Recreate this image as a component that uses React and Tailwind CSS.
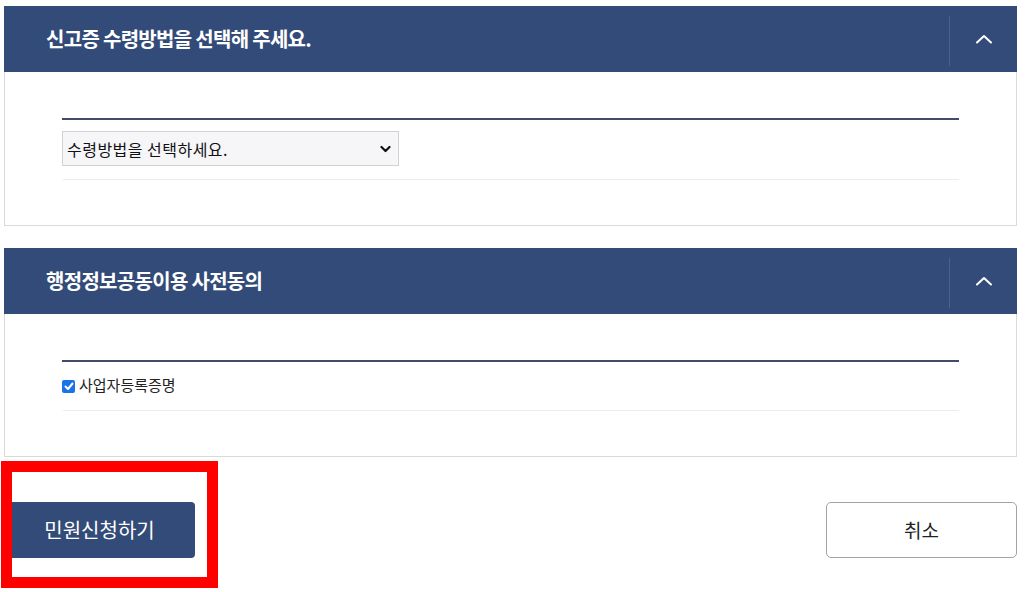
import React from "react";

const font = { fontFamily: '"Noto Sans CJK KR", "Noto Sans", sans-serif' };

function Chevron() {
    return (
        <svg width="18" height="12" viewBox="0 0 18 12" fill="none" stroke="white" strokeWidth="2" strokeLinecap="round" strokeLinejoin="round">
            <path d="M2 9.5L9 3l7 6.5" />
        </svg>
    );
}

function Panel({ title, children, className = "" }) {
    return (
        <section className={"w-[1013px] " + className}>
            <div className="h-[66px] bg-[#334b78] flex items-center">
                <h2 className="flex-1 pl-[42px] text-[20px] font-bold text-white tracking-[-0.035em]">{title}</h2>
                <div className="w-px h-[50px] mt-[4px] bg-[#4b6190]" />
                <button className="w-[67px] h-full flex items-center justify-center">
                    <Chevron />
                </button>
            </div>
            <div className="border border-t-0 border-[#d9d9d9] px-[57px] pt-[46px] pb-[45px]">
                <div className="h-[2px] bg-[#3f4e68]" />
                {children}
                <div className="h-px bg-[#ececec] ml-px" />
            </div>
        </section>
    );
}

export default function App() {
    return (
        <div className="relative w-[1036px] h-[592px] bg-white pl-[4px] pt-[6px]" style={font}>
            <Panel title="신고증 수령방법을 선택해 주세요.">
                <div className="pt-[11px] pb-[13px]">
                    <div className="w-[337px] h-[35px] bg-[#f6f5f8] border border-[#d2d2d2] flex items-center justify-between pl-[4px] pr-[7px]">
                        <span className="text-[16px] tracking-[0.03em] text-[#111]">수령방법을 선택하세요.</span>
                        <svg width="11" height="8" viewBox="0 0 11 8" fill="none" stroke="#111" strokeWidth="2.2" strokeLinecap="round" strokeLinejoin="round">
                            <path d="M1.5 2l4 4 4-4" />
                        </svg>
                    </div>
                </div>
            </Panel>

            <Panel title="행정정보공동이용 사전동의" className="mt-[22px]">
                <div className="h-[48px] flex items-center gap-[4px]">
                    <span className="w-[13px] h-[13px] rounded-[2px] bg-[#1a73e8] flex items-center justify-center">
                        <svg width="10" height="9" viewBox="0 0 10 9" fill="none" stroke="white" strokeWidth="2" strokeLinecap="round" strokeLinejoin="round">
                            <path d="M1.5 4.5l2.5 2.5 4.5-5.5" />
                        </svg>
                    </span>
                    <span className="text-[15px] text-[#222] pb-[2px]">사업자등록증명</span>
                </div>
            </Panel>

            <div className="w-[1013px] mt-[45px] flex justify-between">
                <button className="w-[191px] h-[56px] rounded-[4px] bg-[#334b78] text-white text-[20px]">민원신청하기</button>
                <button className="w-[191px] h-[56px] rounded-[5px] border border-[#a3a3a3] bg-white text-[#222] text-[19px]">취소</button>
            </div>

            <div className="absolute left-[1px] top-[461px] w-[217px] h-[127px] border-[11px] border-[#ff0000]" />
        </div>
    );
}
